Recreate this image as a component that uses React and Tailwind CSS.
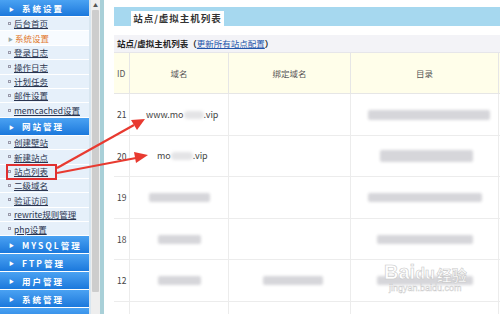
import React from "react";

const font = { fontFamily: '"Noto Sans CJK SC", "Liberation Sans", sans-serif' };

function Header({ label, h = "h-[18px]" }) {
  return (
    <div className={`${h} flex shrink-0 items-center border-b border-white bg-gradient-to-b from-[#4aa2f2] to-[#1a78dc] pl-[9px] text-white`}>
      {label ? <span className="mr-[8px] text-[5px] leading-none">▶</span> : null}
      <span className="text-[8.5px] font-bold tracking-[2px] leading-none">{label}</span>
    </div>
  );
}

function Item({ label, active }) {
  return (
    <div className={`flex h-[14.4px] shrink-0 items-center border-b border-white pl-[8px] ${active ? "bg-[#f7fbff]" : "bg-[#e6f0fa]"}`}>
      {active ? (
        <span className="mr-[3px] w-[4px] text-[5px] leading-none text-[#9aa]">▶</span>
      ) : (
        <span className="mr-[3px] h-[3px] w-[3px] border border-[#99a]" />
      )}
      <span className={`text-[8.5px] leading-none ${active ? "text-[#e2782c]" : "text-[#2a3550] underline"}`}>{label}</span>
    </div>
  );
}

function Blur({ w, ml = 0, h = "h-[9px]" }) {
  return <div className={`${h} rounded-[2px] bg-[#d6d6da] blur-[1.5px]`} style={{ width: w, marginLeft: ml }} />;
}

const rows = [
  { id: "21", h: "h-[42px]", dom: (
      <div className="flex items-center pl-[16px] text-[9px] text-[#444]">www.mo<div className="h-[8px] w-[20px] rounded bg-[#e4e4e6] blur-[1.5px]" />.vip</div>
    ), bind: null, dir: <Blur w={122} ml={17} h="h-[10px]" /> },
  { id: "20", h: "h-[41px]", dom: (
      <div className="flex items-center pl-[27px] text-[9px] text-[#444]">mo<div className="h-[8px] w-[22px] rounded bg-[#e4e4e6] blur-[1.5px]" />.vip</div>
    ), bind: null, dir: <Blur w={93} ml={29} h="h-[12px]" /> },
  { id: "19", h: "h-[42px]", dom: <Blur w={61} ml={19} />, bind: null, dir: <Blur w={114} ml={17} /> },
  { id: "18", h: "h-[41px]", dom: <Blur w={43} ml={28} />, bind: null, dir: <Blur w={96} ml={26} /> },
  { id: "12", h: "h-[42px]", dom: <Blur w={43} ml={28} />, bind: <Blur w={60} ml={34} />, dir: <Blur w={96} ml={26} /> },
  { id: "", h: "h-[20px]", dom: null, bind: null, dir: null },
];

export default function App() {
  return (
    <div className="relative flex h-[314px] w-[500px] overflow-hidden bg-white" style={font}>
      {/* sidebar */}
      <div className="flex w-[89px] shrink-0 flex-col bg-[#e6f0fa]">
        <Header label="系统设置" h="h-[17px]" />
        <Item label="后台首页" />
        <Item label="系统设置" active />
        <Item label="登录日志" />
        <Item label="操作日志" />
        <Item label="计划任务" />
        <Item label="邮件设置" />
        <Item label="memcached设置" />
        <Header label="网站管理" />
        <Item label="创建壁站" />
        <Item label="新建站点" />
        <Item label="站点列表" />
        <Item label="二级域名" />
        <Item label="验证访问" />
        <Item label="rewrite规则管理" />
        <Item label="php设置" />
        <Header label="MYSQL管理" />
        <Header label="FTP管理" />
        <Header label="用户管理" />
        <Header label="系统管理" />
        <Header label="" />
      </div>
      <div className="w-[2px] shrink-0 bg-[#d8e6f0]" />
      {/* scrollbar */}
      <div className="flex w-[9px] shrink-0 flex-col bg-[#eeeeee]">
        <div className="flex h-[10px] shrink-0 items-center justify-center text-[5px] text-[#555]">▲</div>
        <div className="mx-[1px] h-[282px] shrink-0 rounded-[1px] bg-[#cdcdcd]" />
      </div>
      <div className="w-[4px] shrink-0 bg-[#a9d0d8]" />
      {/* main */}
      <div className="flex-1 pl-[10px] pt-[7px]">
        <div className="flex h-[19px] items-end bg-[#a6d8ef] pl-[17px]">
          <div className="flex h-[15px] w-[93px] items-center justify-center bg-white text-[9.5px] font-bold tracking-[1px] text-[#333]">站点/虚拟主机列表</div>
        </div>
        <div className="mt-[9px] flex h-[18px] items-center border-b border-[#e6e6ea] bg-[#f3f3f7] pl-[3px] text-[8.5px] font-bold text-[#222]">
          站点/虚拟主机列表（<span className="font-normal text-[#2255aa] underline">更新所有站点配置</span>）
        </div>
        <div className="flex h-[41px] border-b border-[#e6e6e6] bg-[#fffeea] text-[8.5px] text-[#555]">
          <div className="flex w-[16px] items-center border-r border-[#e6e6e6] pl-[3px]">ID</div>
          <div className="flex w-[99px] items-center justify-center border-r border-[#e6e6e6]">域名</div>
          <div className="flex w-[122px] items-center justify-center border-r border-[#e6e6e6]">绑定域名</div>
          <div className="flex w-[148px] items-center justify-center border-r border-[#e6e6e6]">目录</div>
        </div>
        {rows.map((r, i) => (
          <div key={i} className={`flex ${r.h} shrink-0 border-b border-[#ececec] text-[8.5px] text-[#444]`}>
            <div className="flex w-[16px] items-center border-r border-[#ececec] pl-[3px]">{r.id}</div>
            <div className="flex w-[99px] items-center border-r border-[#ececec]">{r.dom}</div>
            <div className="flex w-[122px] items-center border-r border-[#ececec]">{r.bind}</div>
            <div className="flex w-[148px] items-center border-r border-[#ececec]">{r.dir}</div>
          </div>
        ))}
      </div>

      {/* annotation overlay */}
      <div className="pointer-events-none absolute left-[6px] top-[164px] h-[16px] w-[51px] border-2 border-[#e03030]" />
      <svg className="pointer-events-none absolute left-0 top-0" width="500" height="314">
        <line x1="57" y1="168" x2="134" y2="125" stroke="#e83a30" strokeWidth="2.2" />
        <polygon points="145,119 131,120 137,130" fill="#e83a30" />
        <line x1="57" y1="173" x2="136" y2="158" stroke="#e83a30" strokeWidth="2.2" />
        <polygon points="148,155 134,152 136,163" fill="#e83a30" />
      </svg>

      {/* watermark */}
      <div className="pointer-events-none absolute left-[384px] top-[262px] flex flex-col items-center leading-none">
        <div className="flex items-end text-[20px] font-bold text-white [-webkit-text-stroke:0.6px_#c8c8c8]" style={{ fontFamily: '"Liberation Sans", sans-serif' }}>
          Bai<span className="text-[16px]">du</span>
          <span className="ml-[2px] text-[15px]" style={{ fontFamily: '"Noto Sans CJK SC", sans-serif' }}>经验</span>
        </div>
        <div className="mt-[2px] text-[9px] text-white [-webkit-text-stroke:0.4px_#c8c8c8]" style={{ fontFamily: '"Liberation Sans", sans-serif' }}>jingyan.baidu.com</div>
      </div>
    </div>
  );
}
